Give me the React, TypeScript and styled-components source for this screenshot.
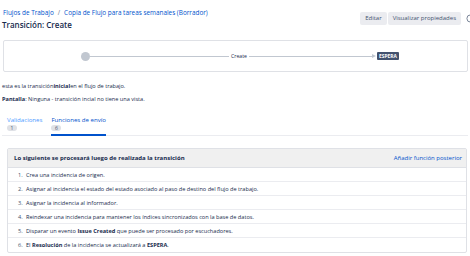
import React from "react";
import styled, { createGlobalStyle } from "styled-components";

const Global = createGlobalStyle`
  html, body { margin: 0; padding: 0; background: #fff; overflow: hidden; }
  body { font-family: "Open Sans", "Noto Sans", sans-serif; color: #172b4d; }
  * { box-sizing: border-box; }
`;

const Page = styled.div`
  width: 470px;
  height: 256px;
  padding: 0 2px;
  display: flex;
  flex-direction: column;
`;

const Header = styled.div`
  display: flex;
  align-items: flex-start;
  justify-content: space-between;
  padding-top: 9px;
  height: 40px;
`;

const TitleBlock = styled.div`
  display: flex;
  flex-direction: column;
  gap: 3px;
  padding-left: 1px;
`;

const Crumbs = styled.div`
  font-size: 6.4px;
  line-height: 8px;
  color: #0052cc;
  display: flex;
  gap: 4px;
`;

const Sep = styled.span`
  color: #6b778c;
`;

const Title = styled.h1`
  margin: 0;
  margin-left: -1px;
  font-size: 8px;
  line-height: 10px;
  font-weight: 600;
  color: #172b4d;
`;

const Actions = styled.div`
  display: flex;
  align-items: center;
  gap: 1px;
  margin-top: 3px;
  margin-right: -8px;
`;

const Button = styled.button`
  font-family: inherit;
  font-size: 6px;
  height: 13px;
  padding: 0 5px;
  border: 0;
  border-radius: 2px;
  background: #ebecf0;
  color: #42526e;
  line-height: 13px;
`;

const IconBtn = styled.span`
  display: flex;
  margin-left: 4px;
  width: 10px;
  color: #6b778c;
`;

const Diagram = styled.div`
  margin-left: 1px;
  height: 32px;
  border: 1px solid #dfe1e6;
  border-radius: 2px;
  display: flex;
  align-items: center;
  padding-left: 77px;
`;

const Node = styled.span`
  width: 9px;
  height: 9px;
  border-radius: 50%;
  background: #c1c7d0;
  flex: none;
`;

const Line = styled.span<{ $w: number }>`
  width: ${(p) => p.$w}px;
  height: 1px;
  background: #c1c7d0;
  flex: none;
`;

const EdgeLabel = styled.span`
  font-size: 5.2px;
  color: #172b4d;
  padding: 0 2px;
`;

const Arrow = styled.span`
  width: 0;
  height: 0;
  border-top: 2px solid transparent;
  border-bottom: 2px solid transparent;
  border-left: 4px solid #c1c7d0;
  margin-right: 1px;
`;

const Status = styled.span`
  background: #42526e;
  color: #fff;
  font-size: 4.9px;
  font-weight: 700;
  padding: 0 2px;
  height: 8px;
  line-height: 8px;
  border-radius: 1px;
`;

const Para = styled.p<{ $top: number }>`
  margin: ${(p) => p.$top}px 0 0 0;
  font-size: 5.6px;
  line-height: 8px;
  color: #172b4d;
`;

const Tabs = styled.div`
  margin-top: 13px;
  display: flex;
  gap: 9px;
  padding-left: 5px;
  border-bottom: 1px solid #ebecf0;
`;

const Tab = styled.div<{ $active?: boolean }>`
  display: flex;
  flex-direction: column;
  align-items: flex-start;
  gap: 1px;
  padding-bottom: 3px;
  font-size: 6.1px;
  line-height: 8px;
  color: ${(p) => (p.$active ? "#0052cc" : "#4c9aff")};
  border-bottom: 2px solid ${(p) => (p.$active ? "#0052cc" : "transparent")};
  margin-bottom: -1px;
`;

const Count = styled.span`
  background: #dfe1e6;
  color: #42526e;
  font-size: 5px;
  line-height: 6px;
  padding: 0 3.5px;
  border-radius: 3px;
`;

const Table = styled.div`
  margin: 12px 1px 0 5px;
  border: 1px solid #dfe1e6;
  border-radius: 2px;
  display: flex;
  flex-direction: column;
`;

const THead = styled.div`
  height: 19px;
  background: #f0f0f0;
  display: flex;
  align-items: center;
  justify-content: space-between;
  padding: 0 4px 0 6px;
  border-bottom: 1px solid #dfe1e6;
`;

const HeadText = styled.span`
  font-size: 6px;
  font-weight: 700;
  color: #172b4d;
`;

const AddLink = styled.span`
  font-size: 6px;
  color: #0052cc;
`;

const Row = styled.div`
  height: 14px;
  display: flex;
  align-items: center;
  padding-left: 10px;
  font-size: 5.6px;
  color: #172b4d;
  border-bottom: 1px solid #ebecf0;
  &:last-child { border-bottom: 0; }
`;

const Num = styled.span`
  color: #42526e;
  width: 8px;
  flex: none;
`;

const steps: React.ReactNode[] = [
  "Crea una incidencia de origen.",
  "Asignar al incidencia el estado del estado asociado al paso de destino del flujo de trabajo.",
  "Asignar la incidencia al informador.",
  "Reindexar una incidencia para mantener los índices sincronizados con la base de datos.",
  <>Disparar un evento <b>Issue Created</b> que puede ser procesado por escuchadores.</>,
  <>El <b>Resolución</b> de la incidencia se actualizará a <b>ESPERA</b>.</>,
];

export default function App() {
  return (
    <Page>
      <Global />
      <Header>
        <TitleBlock>
          <Crumbs>
            <span>Flujos de Trabajo</span>
            <Sep>/</Sep>
            <span>Copia de Flujo para tareas semanales (Borrador)</span>
          </Crumbs>
          <Title>Transición: Create</Title>
        </TitleBlock>
        <Actions>
          <Button>Editar</Button>
          <Button>Visualizar propiedades</Button>
          <IconBtn>
            <svg width="9" height="9" viewBox="0 0 10 10" fill="none" stroke="currentColor" strokeWidth="1">
              <circle cx="5" cy="5" r="4" />
              <path d="M5 2.8v2.4l1.5 1" />
            </svg>
          </IconBtn>
        </Actions>
      </Header>
      <Diagram>
        <Node />
        <Line $w={139} />
        <EdgeLabel>Create</EdgeLabel>
        <Line $w={123} />
        <Arrow />
        <Status>ESPERA</Status>
      </Diagram>
      <Para $top={10}>
        esta es la transición<b>inicial</b>en el flujo de trabajo.
      </Para>
      <Para $top={5}>
        <b>Pantalla</b>: Ninguna - transición incial no tiene una vista.
      </Para>
      <Tabs>
        <Tab>
          Validaciones
          <Count>1</Count>
        </Tab>
        <Tab $active>
          Funciones de envío
          <Count>6</Count>
        </Tab>
      </Tabs>
      <Table>
        <THead>
          <HeadText>Lo siguiente se procesará luego de realizada la transición</HeadText>
          <AddLink>Añadir función posterior</AddLink>
        </THead>
        {steps.map((s, i) => (
          <Row key={i}>
            <Num>{i + 1}.</Num>
            <span>{s}</span>
          </Row>
        ))}
      </Table>
    </Page>
  );
}
